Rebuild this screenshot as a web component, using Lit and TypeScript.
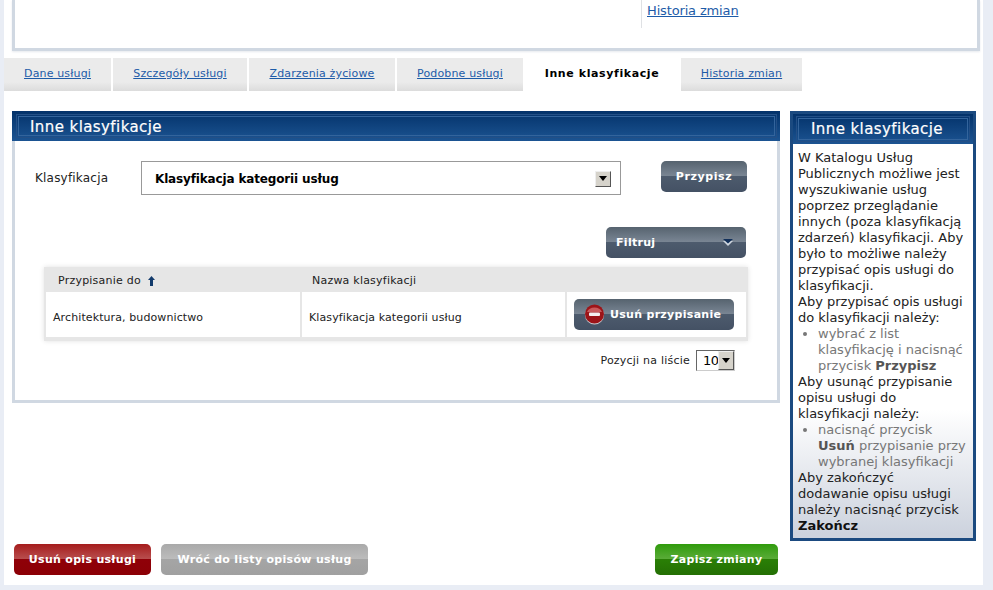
import { LitElement, html, css } from "lit";
import { customElement } from "lit/decorators.js";

const tabs = ["Dane usługi", "Szczegóły usługi", "Zdarzenia życiowe", "Podobne usługi"];

@customElement("app-root")
export class AppRoot extends LitElement {
  static styles = css`
    :host {
      display: block;
      width: 993px;
      height: 590px;
      overflow: hidden;
      background: #e9edf5;
      font-family: "DejaVu Sans", Verdana, sans-serif;
      color: #111;
      font-size: 11px;
    }
    a { color: #1d5ba8; text-decoration: underline; }
    .page {
      margin-left: 4px;
      width: 979px;
      height: 585px;
      background: #fff;
      box-sizing: border-box;
      overflow: hidden;
    }
    .top {
      margin-left: 8px;
      width: 968px;
      height: 51px;
      box-sizing: border-box;
      border: 3px solid #d0d8e2;
      border-top: 0;
      box-shadow: 0 1px 2px #e6e9ee;
      display: flex;
      justify-content: flex-end;
    }
    .top-link {
      width: 336px;
      height: 28px;
      box-sizing: border-box;
      border-left: 1px solid #dfe1e4;
      padding-left: 5px;
      font-size: 13px;
      line-height: 21px;
      letter-spacing: -0.15px;
    }
    .tabs { display: flex; margin-top: 7px; height: 33px; letter-spacing: 0.15px; }
    .tab {
      height: 33px;
      margin-right: 2px;
      display: flex;
      align-items: center;
      justify-content: center;
      box-sizing: border-box;
      background: linear-gradient(#ebebeb 0, #ebebeb 24px, #dcdcdc 33px);
      padding-bottom: 2px;
    }
    .tab.active {
      background: #fff;
      font-weight: bold;
      color: #000;
      margin-right: 0;
      letter-spacing: 0.6px;
    }
    .main { display: flex; margin: 20px 0 0 8px; height: 430px; gap: 10px; }
    .left {
      width: 768px;
      height: 292px;
      box-sizing: border-box;
      border: 3px solid #d0d8e2;
      border-top: 0;
      display: flex;
      flex-direction: column;
    }
    .head {
      margin: 0 -3px;
      height: 30px;
      background: linear-gradient(#03326a, #1c5492);
      padding: 4px 4px 4px 5px;
      box-sizing: border-box;
      flex: none;
    }
    .head-in {
      height: 20px;
      box-sizing: border-box;
      border: 1px solid #33649c;
      outline: 1px solid #234f86;
      outline-offset: 1px;
      padding-left: 11px;
      color: #fff;
      font-size: 15px;
      line-height: 20px;
      letter-spacing: 0.42px;
      -webkit-text-stroke: 0.2px #fff;
      margin: 1px;
    }
    .form { display: flex; align-items: flex-start; height: 54px; box-sizing: border-box; padding: 20px 0 0 20px; }
    .form label { width: 106px; height: 34px; font-size: 12px; letter-spacing: 0.2px; line-height: 35px; color: #222; }
    .select {
      width: 480px;
      height: 34px;
      box-sizing: border-box;
      border: 1px solid #999;
      display: flex;
      align-items: center;
      justify-content: space-between;
      padding: 1px 9px 0 13px;
      font-size: 12px;
      letter-spacing: -0.15px;
      font-weight: bold;
      color: #000;
    }
    .arrow {
      width: 16px;
      height: 16px;
      box-sizing: border-box;
      background: #d6d3cb;
      border: 1px solid;
      border-color: #eee #555 #555 #eee;
      display: flex;
      align-items: center;
      justify-content: center;
      flex: none;
    }
    .btn {
      height: 31px;
      border-radius: 5px;
      color: #fff;
      font-weight: bold;
      font-size: 11px;
      letter-spacing: 0.3px;
      display: flex;
      align-items: center;
      justify-content: center;
      box-sizing: border-box;
      flex: none;
      background: linear-gradient(#56636f 0, #7b8795 50%, #4d5b6d 50%, #445164 100%);
    }
    .assign { width: 86px; margin-left: 40px; letter-spacing: 0.6px; }
    .filter-row { display: flex; justify-content: flex-end; padding-right: 31px; margin-top: 32px; }
    .filter { width: 140px; justify-content: space-between; padding: 0 12px 0 10px; }
    .table {
      margin: 9px 0 0 29px;
      width: 704px;
      height: 74px;
      box-sizing: border-box;
      background: #e6e6e6;
      padding: 0 2px 4px;
      box-shadow: 0 0 5px rgba(0,0,0,.12);
      display: grid;
      grid-template-columns: 254px 263px 179px;
      grid-template-rows: 25px 45px;
      column-gap: 2px;
      color: #222;
      letter-spacing: 0.1px;
    }
    .th { line-height: 25px; padding: 2px 0 0 12px; display: flex; align-items: center; gap: 7px; letter-spacing: 0.22px; }
    .th.second { padding-left: 10px; }
    .td { background: #fff; display: flex; align-items: center; padding: 5px 0 0 7px; }
    .td.act { padding: 0 0 0 7px; }
    .remove { width: 160px; justify-content: flex-start; padding-left: 10px; gap: 5px; }
    .pager {
      display: flex;
      justify-content: flex-end;
      align-items: center;
      gap: 6px;
      margin: 9px 42px 0 0;
      height: 21px;
      color: #222;
      letter-spacing: 0.22px;
    }
    .mini {
      width: 39px;
      height: 21px;
      box-sizing: border-box;
      border: 1px solid;
      border-color: #666 #ccc #ccc #666;
      display: flex;
      align-items: center;
      justify-content: space-between;
      padding-left: 6px;
      font-size: 13px;
      letter-spacing: -0.6px;
      color: #000;
    }
    .mini .arrow { height: 19px; width: 16px; }
    .side {
      width: 186px;
      height: 430px;
      box-sizing: border-box;
      border: 3px solid #1b4a80;
      background: linear-gradient(#fff 0, #fff 296px, #cdd3de 420px);
      flex: none;
      display: flex;
      flex-direction: column;
    }
    .side-head {
      height: 30px;
      margin: 0;
      background: linear-gradient(#03326a, #1c5492);
      padding: 3px 4px;
      box-sizing: border-box;
      flex: none;
    }
    .side-head .head-in { padding: 0 12px 0 0; text-align: center; line-height: 20px; height: 22px; }
    .side-body { padding: 6px 6px 0 5px; font-size: 13px; line-height: 16px; color: #222; }
    .side-body p { margin: 0; }
    .side-body ul { margin: 0; padding-left: 20px; color: #777; }
    .side-body b { color: #555; }
    .side-body p b { color: #111; }
    .footer { display: flex; margin: 3px 0 0 10px; width: 764px; }
    .red { width: 137px; background: linear-gradient(#a51c1c 0, #b95050 50%, #8f0008 50%, #8c0006 100%); }
    .grey { width: 207px; margin-left: 10px; background: linear-gradient(#a9a9a9 0, #bdbdbd 50%, #a5a5a5 50%, #a0a0a0 100%); }
    .green { width: 123px; margin-left: auto; background: linear-gradient(#2f9b0c 0, #5cac3a 50%, #2a7f06 50%, #246f04 100%); }
  `;

  private arrow() {
    return html`<span class="arrow"><svg width="8" height="5" viewBox="0 0 8 5"><path d="M0 0h8L4 5z" fill="#000"/></svg></span>`;
  }

  render() {
    return html`
      <div class="page">
        <div class="top"><div class="top-link"><a href="#">Historia zmian</a></div></div>
        <div class="tabs">
          <div class="tab" style="width:107px"><a href="#">${tabs[0]}</a></div>
          <div class="tab" style="width:134px"><a href="#">${tabs[1]}</a></div>
          <div class="tab" style="width:146px"><a href="#">${tabs[2]}</a></div>
          <div class="tab" style="width:126px;margin-right:0"><a href="#">${tabs[3]}</a></div>
          <div class="tab active" style="width:158px">Inne klasyfikacje</div>
          <div class="tab" style="width:121px"><a href="#">Historia zmian</a></div>
        </div>
        <div class="main">
          <div class="left">
            <div class="head"><div class="head-in">Inne klasyfikacje</div></div>
            <div class="form">
              <label>Klasyfikacja</label>
              <div class="select">Klasyfikacja kategorii usług ${this.arrow()}</div>
              <div class="btn assign">Przypisz</div>
            </div>
            <div class="filter-row">
              <div class="btn filter">Filtruj
                <svg width="12" height="7" viewBox="0 0 12 7"><path d="M1 2l5 5 5-5z" fill="#cfd6de"/><path d="M1 0h10L6 4.5z" fill="#12305a"/></svg>
              </div>
            </div>
            <div class="table">
              <div class="th">Przypisanie do
                <svg width="7" height="10" viewBox="0 0 7 10"><path d="M3.5 0L7 4H5v6H2V4H0z" fill="#123a6b"/></svg>
              </div>
              <div class="th second">Nazwa klasyfikacji</div>
              <div class="th"></div>
              <div class="td">Architektura, budownictwo</div>
              <div class="td">Klasyfikacja kategorii usług</div>
              <div class="td act">
                <div class="btn remove">
                  <svg width="21" height="21" viewBox="0 0 21 21">
                    <circle cx="10.5" cy="11" r="9.5" fill="#c9ccd0"/>
                    <circle cx="10.5" cy="10" r="9.5" fill="#9c1418"/>
                    <path d="M3 8a8 7 0 0 1 15 0z" fill="#c85a5c"/>
                    <rect x="5" y="8.5" width="11" height="3.5" rx="1" fill="#f4f0f0"/>
                  </svg>
                  Usuń przypisanie
                </div>
              </div>
            </div>
            <div class="pager">Pozycji na liście <div class="mini">10${this.arrow()}</div></div>
          </div>
          <div class="side">
            <div class="side-head"><div class="head-in">Inne klasyfikacje</div></div>
            <div class="side-body">
              <p>W Katalogu Usług Publicznych możliwe jest wyszukiwanie usług poprzez przeglądanie innych (poza klasyfikacją zdarzeń) klasyfikacji. Aby było to możliwe należy przypisać opis usługi do klasyfikacji.</p>
              <p>Aby przypisać opis usługi do klasyfikacji należy:</p>
              <ul><li>wybrać z list klasyfikację i nacisnąć przycisk <b>Przypisz</b></li></ul>
              <p>Aby usunąć przypisanie opisu usługi do klasyfikacji należy:</p>
              <ul><li>nacisnąć przycisk <b>Usuń</b> przypisanie przy wybranej klasyfikacji</li></ul>
              <p>Aby zakończyć dodawanie opisu usługi należy nacisnąć przycisk <b>Zakończ</b></p>
            </div>
          </div>
        </div>
        <div class="footer">
          <div class="btn red">Usuń opis usługi</div>
          <div class="btn grey">Wróć do listy opisów usług</div>
          <div class="btn green">Zapisz zmiany</div>
        </div>
      </div>
    `;
  }
}
